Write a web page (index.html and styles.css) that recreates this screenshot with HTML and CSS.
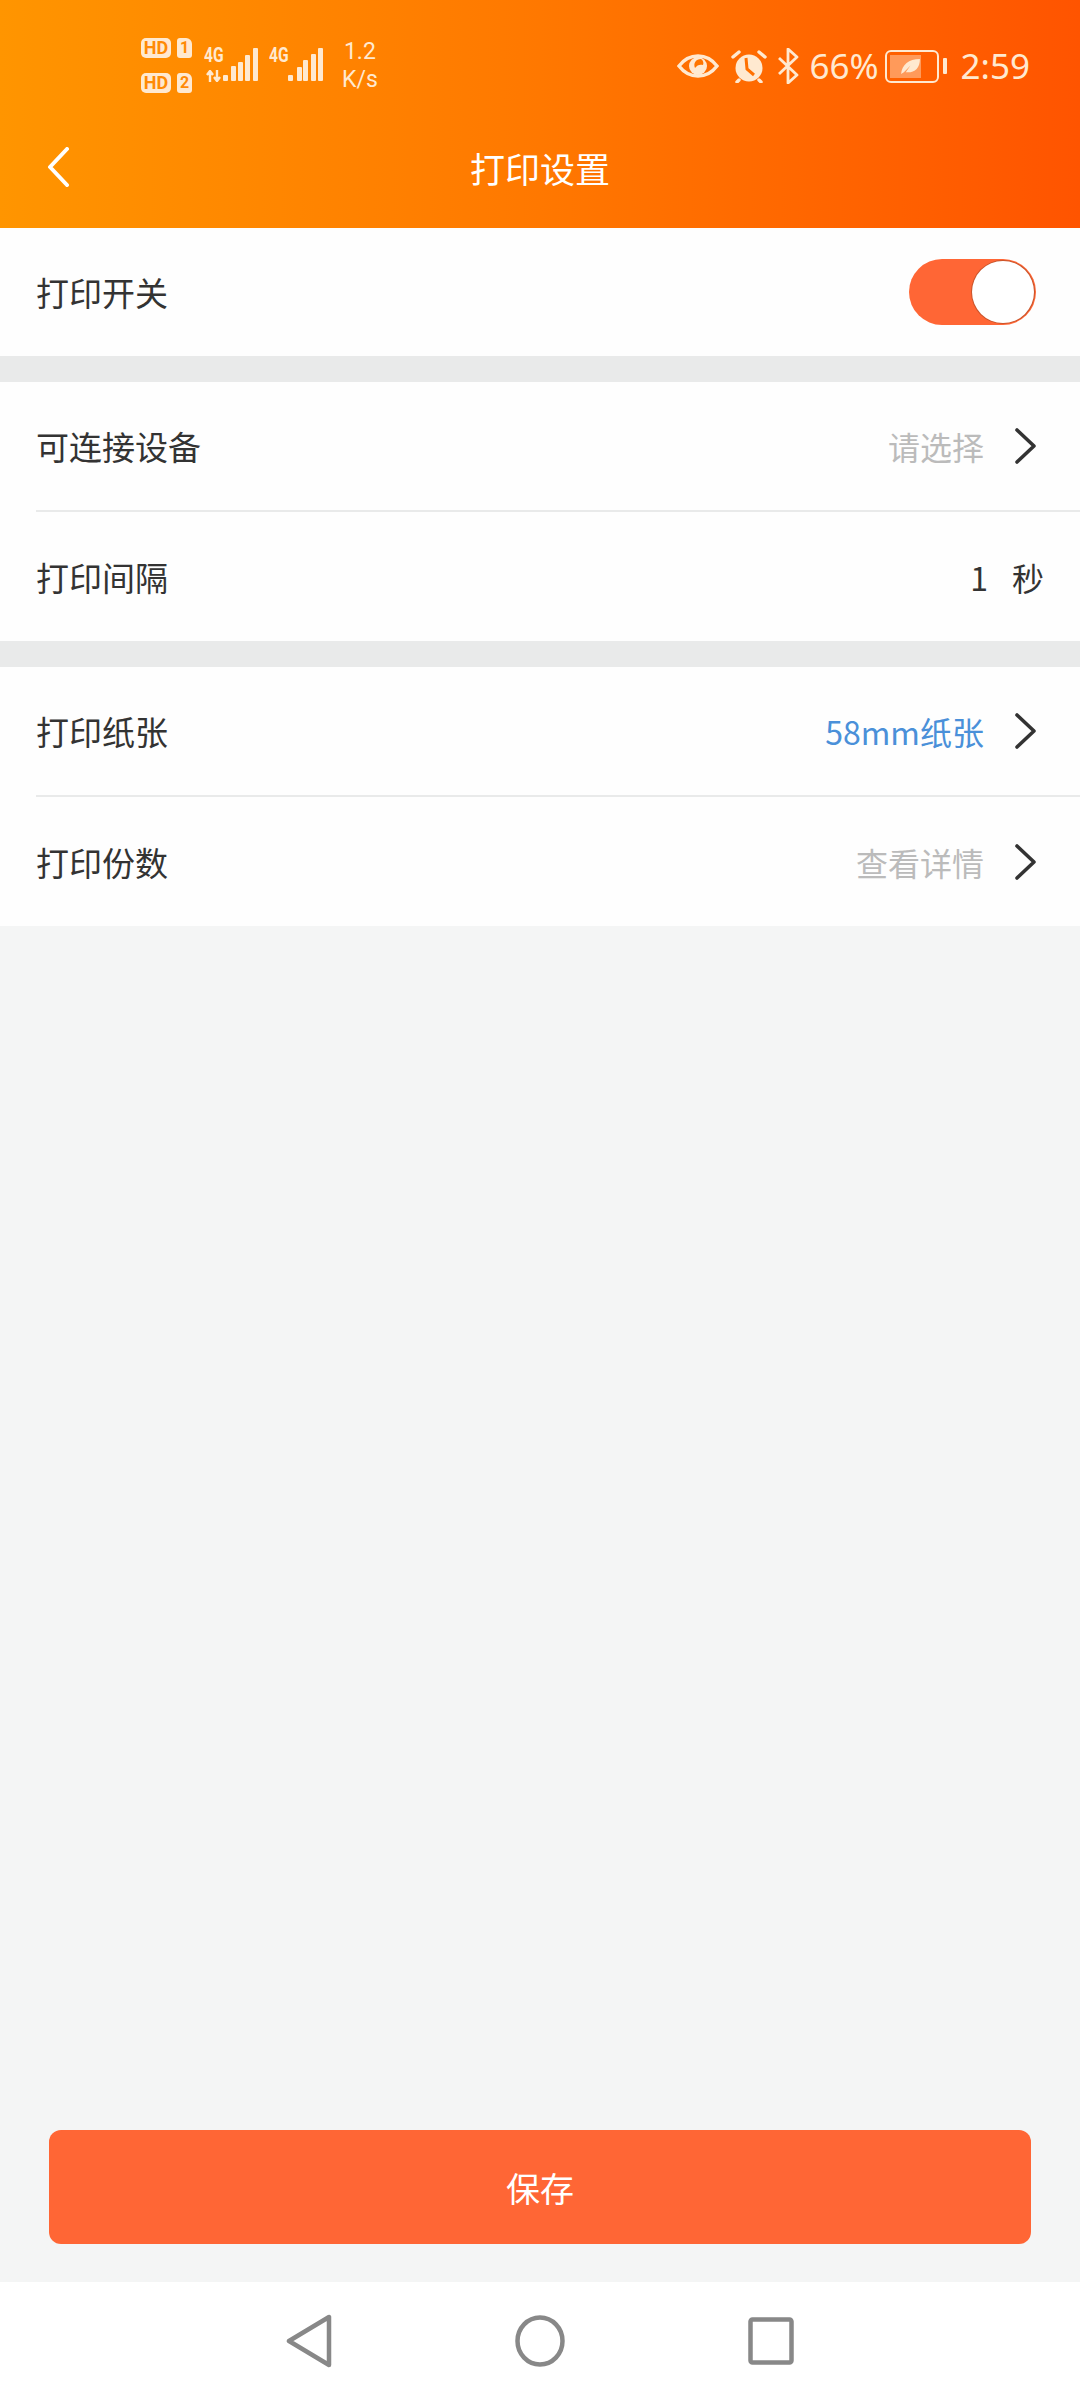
FILE: index.html

```html
<!DOCTYPE html>
<html lang="zh-CN">
<head>
  <meta charset="UTF-8" />
  <meta name="viewport" content="width=device-width, initial-scale=1.0"/>
  <title>打印设置</title>
  <link rel="stylesheet" href="styles.css">
</head>
<body>
  <div class="page">
    <header class="top">
      <div class="status">
        <div class="status-left">
          <div class="sims">
            <div class="sim"><span class="hd">HD</span><span class="slot">1</span></div>
            <div class="sim"><span class="hd">HD</span><span class="slot">2</span></div>
          </div>
          <div class="signal signal-one">
            <span class="net">4G</span>
            <svg class="bars" width="36" height="33" viewBox="0 0 36 33">
              <rect x="0" y="27" width="5" height="6" rx="1"/>
              <rect x="8" y="18" width="5" height="15" rx="1"/>
              <rect x="15" y="14" width="5" height="19" rx="1"/>
              <rect x="22" y="7" width="5" height="26" rx="1"/>
              <rect x="30" y="0" width="5" height="33" rx="1"/>
            </svg>
            <svg class="arrows" width="15" height="12" viewBox="0 0 15 12">
              <path d="M4 12V2M1 5l3-4 3 4M11 0v10M8 7l3 4 3-4" fill="none" stroke="#ffe9d0" stroke-width="2.4"/>
            </svg>
          </div>
          <div class="signal signal-two">
            <span class="net">4G</span>
            <svg class="bars" width="35" height="33" viewBox="0 0 35 33">
              <rect x="0" y="27" width="5" height="6" rx="1"/>
              <rect x="9" y="19" width="5" height="14" rx="1"/>
              <rect x="15" y="12" width="5" height="21" rx="1"/>
              <rect x="23" y="6" width="5" height="27" rx="1"/>
              <rect x="30" y="0" width="5" height="33" rx="1"/>
            </svg>
          </div>
          <div class="speed"><span>1.2</span><span>K/s</span></div>
        </div>
        <div class="status-right">
          <svg class="eye" width="42" height="24" viewBox="0 0 42 24">
            <path d="M2 12C8 4 14 2 21 2s13 2 19 10c-6 8-12 10-19 10S8 20 2 12z" fill="none" stroke="#ffe9d0" stroke-width="3.4"/>
            <circle cx="21" cy="12" r="9" fill="#ffe9d0"/>
            <path d="M24 5c-5 0-8 4-6 9 2-3 5-4 8-3 1-2 0-5-2-6z" fill="#ff7500"/>
          </svg>
          <svg class="alarm" width="36" height="34" viewBox="0 0 36 34">
            <circle cx="18" cy="19" r="13.5" fill="#ffe9d0"/>
            <path d="M2 8l6-5M34 8l-6-5M8 31l-2 2M28 31l2 2" stroke="#ffe9d0" stroke-width="3.4" stroke-linecap="round"/>
            <path d="M15 9l1 11 7 6" fill="none" stroke="#ff7000" stroke-width="3"/>
          </svg>
          <svg class="bt" width="22" height="36" viewBox="0 0 22 36">
            <path d="M2 10l18 17-9 8V1l9 8L2 26" fill="none" stroke="#ffe9d0" stroke-width="2.8" stroke-linejoin="round"/>
          </svg>
          <span class="pct">66%</span>
          <div class="battery">
            <div class="battery-body">
              <div class="battery-fill"></div>
              <svg class="leaf" width="21" height="17" viewBox="0 0 22 18">
                <path d="M1 17C2 7 9 1 21 1c0 10-6 15-15 14l5-7-7 7z" fill="#ffe9d0"/>
              </svg>
            </div>
            <div class="battery-tip"></div>
          </div>
          <span class="clock">2:59</span>
        </div>
      </div>
      <div class="titlebar">
        <svg class="back" width="24" height="40" viewBox="0 0 24 40">
          <path d="M21 2L4 20l17 18" fill="none" stroke="#fff" stroke-width="4" stroke-linecap="round" stroke-linejoin="round"/>
        </svg>
        <h1 class="title">打印设置</h1>
      </div>
    </header>

    <section class="group switch-group">
      <div class="row">
        <span class="label">打印开关</span>
        <div class="switch"><div class="knob"></div></div>
      </div>
    </section>

    <section class="group">
      <div class="row line">
        <span class="label">可连接设备</span>
        <div class="value-wrap">
          <span class="value muted">请选择</span>
          <svg class="chev" width="22" height="36" viewBox="0 0 22 36"><path d="M3 2l17 16L3 34" fill="none" stroke="#333" stroke-width="3.6" stroke-linecap="round" stroke-linejoin="round"/></svg>
        </div>
      </div>
      <div class="row">
        <span class="label">打印间隔</span>
        <div class="value-wrap interval">
          <span class="value">1</span>
          <span class="value">秒</span>
        </div>
      </div>
    </section>

    <section class="group">
      <div class="row line">
        <span class="label">打印纸张</span>
        <div class="value-wrap">
          <span class="value blue">58mm纸张</span>
          <svg class="chev" width="22" height="36" viewBox="0 0 22 36"><path d="M3 2l17 16L3 34" fill="none" stroke="#333" stroke-width="3.6" stroke-linecap="round" stroke-linejoin="round"/></svg>
        </div>
      </div>
      <div class="row">
        <span class="label">打印份数</span>
        <div class="value-wrap">
          <span class="value muted">查看详情</span>
          <svg class="chev" width="22" height="36" viewBox="0 0 22 36"><path d="M3 2l17 16L3 34" fill="none" stroke="#333" stroke-width="3.6" stroke-linecap="round" stroke-linejoin="round"/></svg>
        </div>
      </div>
    </section>

    <div class="spacer"></div>

    <div class="save-wrap">
      <button class="save">保存</button>
    </div>

    <nav class="navbar">
      <svg width="46" height="54" viewBox="0 0 46 54"><path d="M3 27L43 3v48z" fill="none" stroke="#888" stroke-width="4.5" stroke-linejoin="round"/></svg>
      <svg width="50" height="52" viewBox="0 0 50 52"><ellipse cx="25" cy="26" rx="22.5" ry="23.5" fill="none" stroke="#888" stroke-width="4.5"/></svg>
      <svg width="46" height="48" viewBox="0 0 46 48"><rect x="2.5" y="2.5" width="41" height="43" rx="2" fill="none" stroke="#888" stroke-width="4.5"/></svg>
    </nav>
  </div>
</body>
</html>
```

FILE: styles.css

```css
* {
  box-sizing: border-box;
}
body {
  font-family: "Noto Sans CJK SC", "Noto Sans", sans-serif;
  margin: 0;
  background-color: #f4f5f5;
}
.page {
  height: 2400px;
  display: flex;
  flex-direction: column;
}

/* header */
.top {
  height: 228px;
  background: linear-gradient(90deg, #ff9500, #ff7800 50%, #ff5400);
  color: #fff;
}
.status {
  height: 100px;
  padding: 32px 50px 0 141px;
  display: flex;
  justify-content: space-between;
  color: #ffe9d0;
}
.status-left {
  display: flex;
  height: 64px;
}
.sims {
  display: flex;
  flex-direction: column;
  gap: 15px;
  padding-top: 6px;
}
.sim {
  display: flex;
  gap: 6px;
}
.hd {
  width: 30px;
  height: 20px;
  background: #ffe9d0;
  color: #ff8a05;
  border-radius: 5px;
  font: 700 18px/20px "Roboto", sans-serif;
  text-align: center;
}
.slot {
  width: 15px;
  height: 20px;
  background: #ffe9d0;
  color: #ff8a05;
  border-radius: 3px 6px 3px 3px;
  font: 700 16px/20px "Roboto", sans-serif;
  text-align: center;
}
.signal {
  position: relative;
  display: flex;
  height: 49px;
  margin-left: 12px;
  padding-top: 16px;
}
.signal-two {
  margin-left: 10px;
}
.net {
  width: 19px;
  font: 700 20px/15px "Roboto", sans-serif;
  transform: scaleX(0.78);
  transform-origin: left top;
}
.bars {
  fill: #ffe9d0;
}
.arrows {
  position: absolute;
  left: 2px;
  top: 38px;
}
.speed {
  display: flex;
  flex-direction: column;
  align-items: center;
  margin-left: 19px;
  padding-top: 6px;
  font: 400 23px/28px "Roboto", sans-serif;
}
.status-right {
  display: flex;
  align-items: center;
  height: 68px;
}
.eye {
  margin-right: 12px;
}
.alarm {
  margin-right: 10px;
}
.bt {
  margin-right: 10px;
}
.pct {
  font: 400 35px/44px "Noto Sans", sans-serif;
  margin-right: 6px;
}
.clock {
  font: 400 35px/44px "Noto Sans", sans-serif;
  margin-left: 14px;
}
.battery {
  display: flex;
  align-items: center;
  gap: 4px;
}
.battery-body {
  position: relative;
  width: 54px;
  height: 33px;
  border: 2.5px solid #ffe9d0;
  border-radius: 6px;
  padding: 3px;
}
.battery-fill {
  width: 72%;
  height: 100%;
  background: #ff9a5a;
}
.leaf {
  position: absolute;
  left: 13px;
  top: 6px;
}
.battery-tip {
  width: 4px;
  height: 16px;
  background: #ffe9d0;
  border-radius: 1px;
}
.titlebar {
  position: relative;
  height: 128px;
  display: flex;
  align-items: center;
  justify-content: center;
}
.back {
  position: absolute;
  left: 46px;
  top: 47px;
}
.title {
  margin: 8px 0 0;
  font-size: 35px;
  font-weight: 400;
  line-height: 48px;
}

/* list */
.group {
  background: #fefefe;
  padding-left: 36px;
}
.group + .group {
  border-top: 26px solid #e9eaea;
}
.row {
  height: 129px;
  padding-right: 36px;
  display: flex;
  align-items: center;
  justify-content: space-between;
}
.row.line {
  height: 130px;
  border-bottom: 2px solid #e9eaea;
}
.label {
  font-size: 33px;
  color: #333;
}
.value-wrap {
  display: flex;
  align-items: center;
  gap: 30px;
  margin-right: 8px;
}
.interval {
  gap: 24px;
  margin-right: 0;
}
.value {
  font-size: 32px;
  color: #333;
}
.muted {
  color: #bbb;
}
.blue {
  color: #4a90d9;
}
.switch-group .row {
  height: 128px;
  padding-right: 44px;
}
.switch {
  width: 127px;
  height: 66px;
  border-radius: 33px;
  background: #ff6635;
  padding: 2px;
  display: flex;
  justify-content: flex-end;
}
.knob {
  width: 62px;
  height: 62px;
  border-radius: 50%;
  background: #fff;
  box-shadow: 0 0 0 1px rgba(120, 60, 30, 0.4);
}
.spacer {
  flex: 1;
}

/* bottom */
.save-wrap {
  padding: 0 49px 38px;
}
.save {
  width: 100%;
  height: 114px;
  border: 0;
  border-radius: 12px;
  background: #ff6635;
  color: #fff;
  font-family: inherit;
  font-size: 34px;
}
.navbar {
  height: 118px;
  background: #fff;
  display: flex;
  align-items: center;
  justify-content: center;
  gap: 183px;
}
```
